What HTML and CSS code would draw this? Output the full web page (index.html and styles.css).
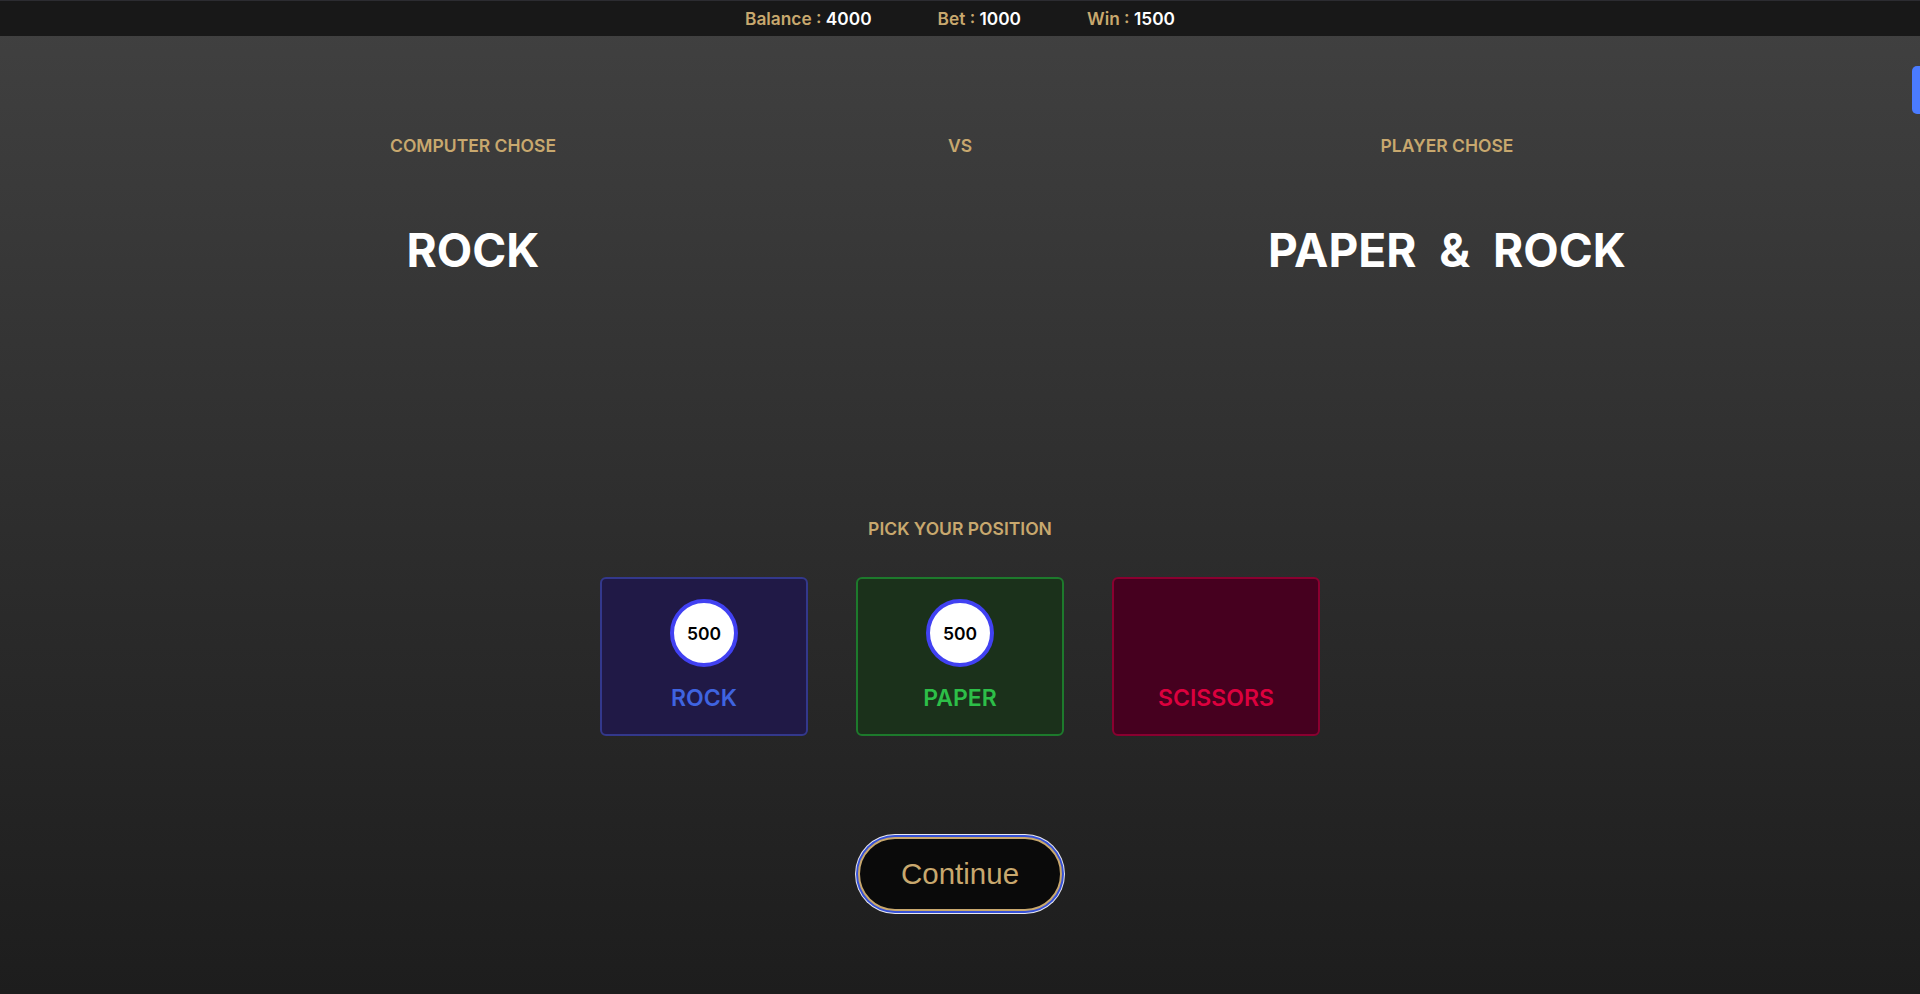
FILE: index.html
```html
<!DOCTYPE html>
<html lang="en">
<head>
<meta charset="utf-8">
<title>Rock Paper Scissors</title>
<link rel="stylesheet" href="styles.css">
</head>
<body>
<header class="topbar">
  <div class="stat"><span class="stat-key">Balance :</span> <span class="stat-val">4000</span></div>
  <div class="stat"><span class="stat-key">Bet :</span> <span class="stat-val">1000</span></div>
  <div class="stat"><span class="stat-key">Win :</span> <span class="stat-val">1500</span></div>
</header>
<main class="game">
  <section class="board">
    <div class="side">
      <div class="label">COMPUTER CHOSE</div>
      <div class="choice">ROCK</div>
    </div>
    <div class="side">
      <div class="label">VS</div>
    </div>
    <div class="side">
      <div class="label">PLAYER CHOSE</div>
      <div class="choice">PAPER <span class="amp">&amp;</span> ROCK</div>
    </div>
  </section>
  <section class="pick">
    <div class="label">PICK YOUR POSITION</div>
    <div class="cards">
      <div class="card card-rock">
        <div class="chip-slot"><div class="chip">500</div></div>
        <div class="card-name">ROCK</div>
      </div>
      <div class="card card-paper">
        <div class="chip-slot"><div class="chip">500</div></div>
        <div class="card-name">PAPER</div>
      </div>
      <div class="card card-scissors">
        <div class="chip-slot"></div>
        <div class="card-name">SCISSORS</div>
      </div>
    </div>
    <button class="continue" type="button">Continue</button>
  </section>
</main>
<div class="side-tab"></div>
</body>
</html>
```

FILE: styles.css
```css
html, body {
  margin: 0;
  padding: 0;
}
body {
  min-height: 994px;
  font-family: Inter, "Noto Sans", sans-serif;
  background: linear-gradient(to bottom, #414141 0px, #2e2e2e 500px, #1d1d1d 994px);
  color: #fff;
  overflow: hidden;
}
.topbar {
  height: 35px;
  border-top: 1px solid #2c2c31;
  background: #181818;
  display: flex;
  justify-content: center;
  align-items: center;
  gap: 66px;
  font-size: 17.3px;
  font-weight: 600;
}
.stat-key { color: #c8a86e; }
.stat-val { color: #fff; }

.game {
  display: flex;
  flex-direction: column;
  align-items: center;
}
.board {
  display: grid;
  grid-template-columns: repeat(3, 487px);
  justify-content: center;
  padding-top: 100px;
}
.side {
  display: flex;
  flex-direction: column;
  align-items: center;
}
.label {
  color: #c8a86e;
  font-size: 17.5px;
  font-weight: 600;
  line-height: 20px;
}
.choice {
  margin-top: 66px;
  font-size: 46px;
  font-weight: 700;
  line-height: 56px;
  color: #fff;
  white-space: pre;
}
.amp { margin: 0 12px; }

.pick {
  margin-top: 241px;
  display: flex;
  flex-direction: column;
  align-items: center;
}
.cards {
  margin-top: 38px;
  display: flex;
  gap: 48px;
}
.card {
  box-sizing: border-box;
  width: 208px;
  height: 159px;
  border: 2.5px solid;
  border-radius: 6px;
  display: flex;
  flex-direction: column;
  align-items: center;
  padding-top: 20px;
}
.card-rock { background: #201946; border-color: #33388c; color: #3f64e0; }
.card-paper { background: #1b311b; border-color: #1d7a2c; color: #2dbf48; }
.card-scissors { background: #46001f; border-color: #8a0030; color: #dc003e; }
.chip-slot {
  height: 68px;
}
.chip {
  box-sizing: border-box;
  width: 68px;
  height: 68px;
  border-radius: 50%;
  background: #fff;
  border: 4px solid #4141f2;
  display: flex;
  align-items: center;
  justify-content: center;
  color: #000;
  font-size: 17.5px;
  font-weight: 600;
}
.card-name {
  margin-top: 17px;
  font-size: 23px;
  font-weight: 600;
  line-height: 28px;
}
.continue {
  margin-top: 101px;
  box-sizing: border-box;
  width: 204px;
  height: 74px;
  border-radius: 37px;
  border: 2px solid #c8a86e;
  background: #0a0a0a;
  box-shadow: 0 0 0 2px #3651d6, 0 0 0 3px #e8e8f0;
  color: #c8a86e;
  font-family: "Liberation Sans", Arial, sans-serif;
  font-size: 29.5px;
  padding: 0;
  cursor: pointer;
}
.side-tab {
  position: fixed;
  right: 0;
  top: 66px;
  width: 8px;
  height: 48px;
  background: #4a7bff;
  border-radius: 5px 0 0 5px;
}
```
